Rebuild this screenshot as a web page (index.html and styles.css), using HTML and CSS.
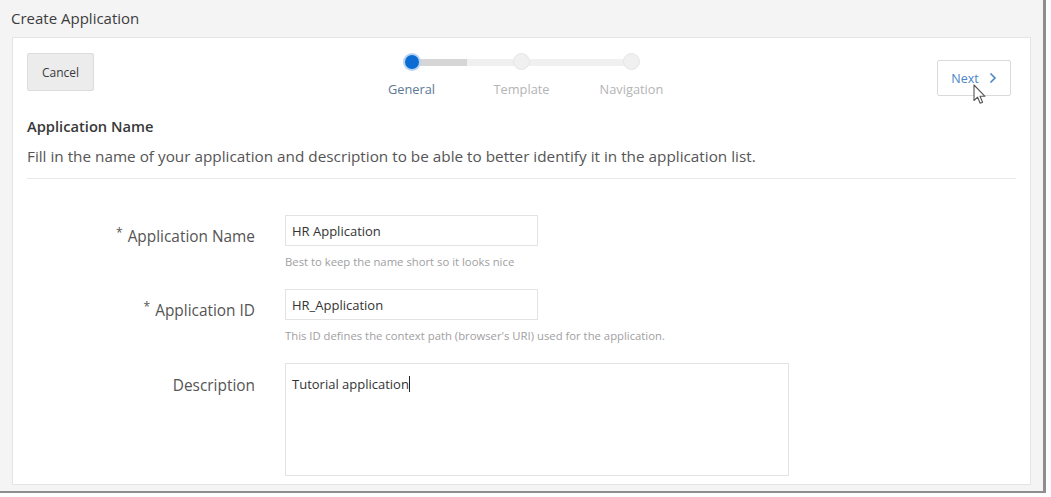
FILE: index.html
```html
<!DOCTYPE html>
<html>
<head>
<meta charset="utf-8">
<link rel="stylesheet" href="styles.css">
</head>
<body>
<div class="frame">
  <div class="title">Create Application</div>
  <div class="card">
    <div class="header">
      <button class="btn btn-cancel">Cancel</button>
      <div class="stepper">
        <div class="track"><div class="track-done"></div></div>
        <div class="step active"><span class="dot"></span><span class="step-label">General</span></div>
        <div class="step"><span class="dot"></span><span class="step-label">Template</span></div>
        <div class="step"><span class="dot"></span><span class="step-label">Navigation</span></div>
      </div>
      <div class="next-wrap">
        <button class="btn btn-next">Next
          <svg class="chev" width="8" height="12" viewBox="0 0 8 12"><path d="M1.5 1.5 L6 6 L1.5 10.5" fill="none" stroke="#4a86c8" stroke-width="1.6"/></svg>
        </button>
        <svg class="cursor" width="14" height="21" viewBox="0 0 14 21"><path d="M1 1 L1 16.5 L4.6 13.2 L7.2 19.3 L9.6 18.3 L7 12.3 L12 12.3 Z" fill="#fff" stroke="#555" stroke-width="1.1" stroke-linejoin="round"/></svg>
      </div>
    </div>
    <h2 class="section-title">Application Name</h2>
    <p class="section-desc">Fill in the name of your application and description to be able to better identify it in the application list.</p>
    <hr class="divider">
    <div class="form">
      <label class="f-label"><span class="req">*</span>Application Name</label>
      <div class="f-field">
        <div class="input">HR Application</div>
        <div class="help">Best to keep the name short so it looks nice</div>
      </div>
      <label class="f-label"><span class="req">*</span>Application ID</label>
      <div class="f-field">
        <div class="input">HR_Application</div>
        <div class="help">This ID defines the context path (browser's URI) used for the application.</div>
      </div>
      <label class="f-label f-label-desc">Description</label>
      <div class="f-field">
        <div class="textarea">Tutorial application<span class="caret"></span></div>
      </div>
    </div>
  </div>
</div>
</body>
</html>
```

FILE: styles.css
```css
* { box-sizing: border-box; }
html, body { margin: 0; padding: 0; background: #fdfdfe; }
body { font-family: "Open Sans", "Noto Sans", sans-serif; color: #444; }

.frame {
  width: 1046px;
  height: 493px;
  background: #f4f4f5;
  border-right: 3px solid #8e8e8e;
  border-bottom: 2px solid #8e8e8e;
  display: flex;
  flex-direction: column;
  overflow: hidden;
}

.title {
  height: 37px;
  padding: 8px 0 0 11px;
  font-size: 15px;
  line-height: 20px;
  color: #3c3c3c;
}

.card {
  flex: 1;
  margin: 0 12px 6px 12px;
  background: #fff;
  border: 1px solid #e4e4e6;
  padding: 15px 14px 0 14px;
}

.header {
  display: grid;
  grid-template-columns: 1fr auto 1fr;
  align-items: start;
  height: 43px;
}

.btn {
  font-family: inherit;
  border-radius: 2px;
  cursor: pointer;
}

.btn-cancel {
  justify-self: start;
  width: 67px;
  height: 38px;
  background: #ececed;
  border: 1px solid #dcdcdc;
  font-size: 12px;
  color: #3a3a3a;
  padding: 0;
}

.stepper {
  position: relative;
  display: flex;
  width: 330px;
  margin-top: 1px;
}
.track {
  position: absolute;
  left: 55px;
  right: 55px;
  top: 5px;
  height: 7px;
  background: #f0f0f1;
}
.track-done {
  width: 55px;
  height: 100%;
  background: #d6d6d7;
}
.step {
  position: relative;
  width: 110px;
  display: flex;
  flex-direction: column;
  align-items: center;
}
.dot {
  width: 17px;
  height: 17px;
  border-radius: 50%;
  background: #f0f0f1;
  border: 1px solid #e6e6e7;
  margin-top: -1px;
}
.step.active .dot {
  width: 14px;
  height: 14px;
  margin-top: 1px;
  margin-bottom: 1px;
  background: #0b6dd4;
  border: none;
  box-shadow: 0 0 0 2px #b9d3f0;
}
.step-label {
  margin-top: 12px;
  font-size: 12.8px;
  line-height: 14px;
  color: #b4b4b6;
}
.step.active .step-label { color: #5d7894; }

.next-wrap {
  justify-self: end;
  position: relative;
  margin-top: 7px;
  margin-right: 5px;
}
.btn-next {
  width: 74px;
  height: 36px;
  background: #fff;
  border: 1px solid #dadadc;
  font-size: 12.5px;
  color: #4a86c8;
  padding: 0;
  display: flex;
  align-items: center;
  justify-content: center;
  gap: 10px;
}
.chev { display: block; }
.cursor {
  position: absolute;
  left: 36px;
  top: 24px;
}

.section-title {
  margin: 20px 0 0 0;
  font-size: 14.7px;
  font-weight: 600;
  line-height: 20px;
  color: #383838;
}
.section-desc {
  margin: 10px 0 0 0;
  font-size: 15.3px;
  line-height: 20px;
  color: #555;
}
.divider {
  margin: 12px 0 0 0;
  border: 0;
  border-top: 1px solid #e9e9ea;
  height: 0;
}

.form {
  display: grid;
  grid-template-columns: 228px 504px;
  column-gap: 30px;
  row-gap: 20px;
  margin-top: 36px;
}
.f-label {
  text-align: right;
  font-size: 15.4px;
  line-height: 20px;
  color: #555;
  padding-top: 8px;
}
.req {
  font-size: 12px;
  vertical-align: 5px;
  margin-right: 5px;
  color: #555;
}
.f-label-desc { padding-top: 13px; }

.input {
  width: 253px;
  height: 31px;
  border: 1px solid #e3e3e5;
  padding: 6px 0 0 6px;
  font-size: 13px;
  line-height: 18px;
  color: #333;
}
.help {
  margin-top: 8px;
  font-size: 11.3px;
  line-height: 15px;
  color: #a0a0a2;
}
.textarea {
  width: 504px;
  height: 113px;
  border: 1px solid #e3e3e5;
  padding: 11px 0 0 6px;
  font-size: 13px;
  line-height: 18px;
  color: #333;
}
.caret {
  display: inline-block;
  width: 1px;
  height: 16px;
  background: #222;
  vertical-align: -3px;
}
```
